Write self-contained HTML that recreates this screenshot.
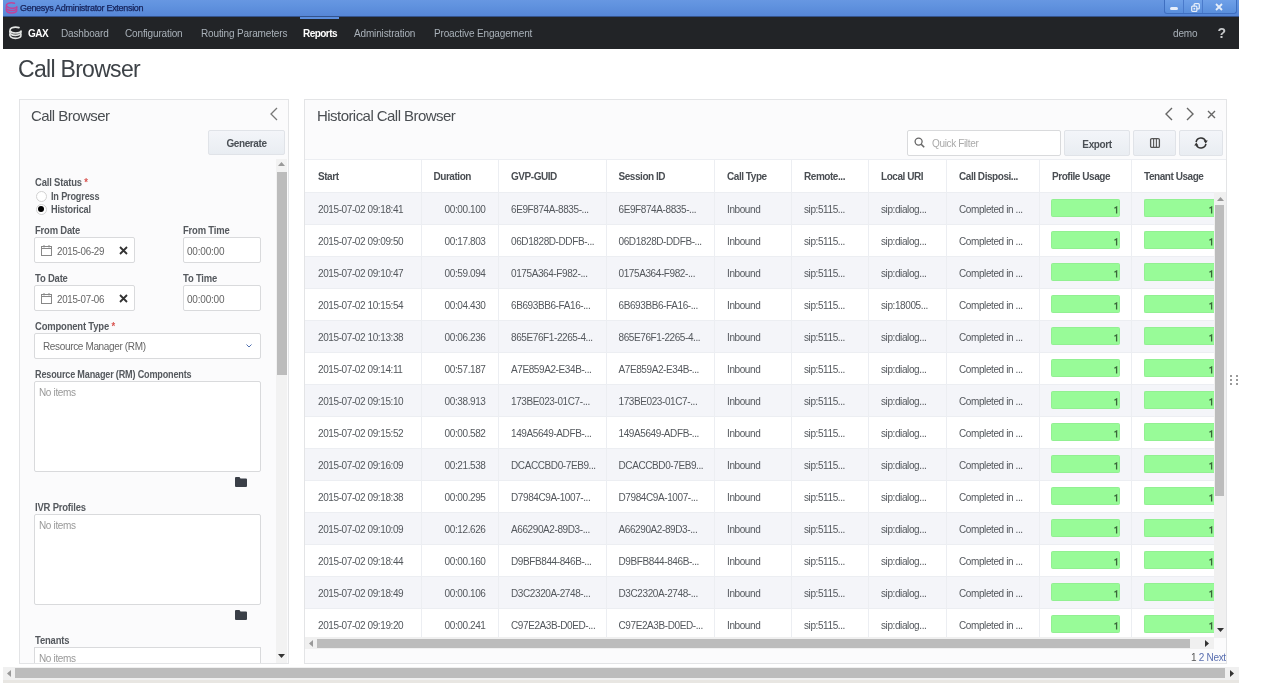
<!DOCTYPE html>
<html><head><meta charset="utf-8">
<style>
*{box-sizing:border-box;margin:0;padding:0}
html,body{width:1282px;height:683px;overflow:hidden;background:#fff;-webkit-font-smoothing:antialiased;font-family:"Liberation Sans",sans-serif;color:#444}
.abs{position:absolute}
#titlebar{position:absolute;left:3px;top:0;width:1236px;height:17px;background:linear-gradient(#6797e2,#6193df 30%,#5585d6);}
#titlebar .t{position:absolute;left:17px;top:3px;font-size:9px;color:#15225a;letter-spacing:-0.3px;-webkit-text-stroke:0.25px #15225a}
#nav{position:absolute;left:3px;top:17px;width:1236px;height:32px;background:#222427}
#nav .i{position:absolute;top:11px;font-size:10px;color:#a9b1b9;white-space:nowrap;letter-spacing:-0.15px}
#nav .act{color:#fff;font-weight:bold;letter-spacing:-0.55px}
#win{position:absolute;left:3px;top:49px;width:1236px;height:634px;background:#fff}
h1{position:absolute;left:18px;top:56px;font-size:23px;letter-spacing:-0.7px;font-weight:normal;color:#3d4247;white-space:nowrap}
.panel{position:absolute;background:#fbfbfc;border:1px solid #e3e4e6}
.ptitle{position:absolute;font-size:15px;letter-spacing:-0.55px;color:#4a4e52;white-space:nowrap}
.lbl{position:absolute;font-size:10.5px;letter-spacing:-0.2px;transform:scaleX(0.9);transform-origin:0 0;font-weight:bold;color:#55595e;white-space:nowrap}
.req{color:#d9534f}
.box{position:absolute;background:#fff;border:1px solid #d9dadc;border-radius:2px}
.btn{position:absolute;letter-spacing:-0.4px;padding-top:1px;background:linear-gradient(#f3f5f9,#e9edf2);border:1px solid #e0e3e8;border-radius:2px;font-size:10px;font-weight:bold;color:#4a4f55;text-align:center}
.txt{position:absolute;font-size:10px;color:#666;white-space:nowrap;letter-spacing:-0.35px}
.th{position:absolute;top:160px;height:32px;line-height:34px;padding-left:13px;font-size:10px;letter-spacing:-0.45px;font-weight:bold;color:#4a4e53;background:#fff;white-space:nowrap}
.tr{position:absolute;left:305px;width:909px;height:32px;background:#fff;border-top:1px solid #eceef2}
.tr.odd{background:#f4f5f9}
.td{position:absolute;height:32px;line-height:35px;padding-left:13px;font-size:10px;letter-spacing:-0.4px;color:#54585d;white-space:nowrap;overflow:hidden}
.td.num{text-align:right;padding-left:0;padding-right:12.5px}
.vsep{position:absolute;top:160px;width:1px;height:478px;background:#eceef2}
.bar{position:absolute;height:18px;background:#98fb98;border:1px solid #92f092;border-radius:1.5px;font-size:11px;color:#2a4a2a;text-align:right;padding-right:1px;line-height:18px;}
.one{position:absolute;right:1px;top:6px}
.bar.clip{border-right:none;border-radius:2px 0 0 2px}
</style></head><body><div id="root" style="position:absolute;left:0;top:0;width:1282px;height:683px;will-change:transform">
<div id="titlebar">
  <svg class="abs" style="left:2px;top:2px" width="13" height="12" viewBox="0 0 13 12"><g stroke="#c0449a" stroke-width="1.5" fill="none" stroke-linecap="round"><path d="M9.5 1.2 Q6 0.4 3.2 1.4 Q0.8 2.5 1.6 4.2 Q3 6.3 6.5 6.3 Q11 6.2 11.8 4.8"/><path d="M1.2 5 Q1 8.5 6.5 8.6 Q12 8.5 11.8 5.5"/><path d="M1.2 7.5 Q1 10.8 6.5 10.9 Q12 10.8 11.8 7.8"/></g></svg>
  <div class="t">Genesys Administrator Extension</div>
  <div class="abs" style="left:1161px;top:0;width:73px;height:14px;border:1px solid #3f6fc0;border-top:none;border-radius:0 0 3px 3px;background:linear-gradient(#6fa0e8,#5a8fdc)"></div>
  <div class="abs" style="left:1180px;top:0;width:1px;height:13px;background:#4a7acb"></div>
  <div class="abs" style="left:1199px;top:0;width:1px;height:13px;background:#4a7acb"></div>
  <div class="abs" style="left:1167px;top:7px;width:8px;height:3px;background:#e6eefa;border-radius:1.5px"></div>
  <svg class="abs" style="left:1188px;top:2.5px" width="9" height="9" viewBox="0 0 10 10"><rect x="3.5" y="0.8" width="5.7" height="5.7" rx="1" fill="none" stroke="#e6eefa" stroke-width="1.4"/><rect x="0.8" y="3.5" width="5.7" height="5.7" rx="1" fill="#5a8fdc" stroke="#e6eefa" stroke-width="1.4"/><rect x="2.7" y="5.3" width="2" height="2" fill="#e6eefa"/></svg>
  <svg class="abs" style="left:1212px;top:3px" width="8" height="8" viewBox="0 0 8 8"><path d="M1 1 L7 7 M7 1 L1 7" stroke="#e6eefa" stroke-width="1.8"/></svg>
  <div class="abs" style="left:0;top:16px;width:1236px;height:1px;background:#34538c"></div>
</div>
<div id="nav">
  <svg class="abs" style="left:5px;top:9px" width="15" height="14" viewBox="0 0 15 14"><g stroke="#e4e6e4" stroke-width="1.6" fill="none" stroke-linecap="round"><path d="M11 1.6 Q7 0.6 4 1.8 Q1.5 3 2.2 4.8 Q3.5 7 7.5 7 Q12.5 6.9 13 5"/><path d="M1.8 5.2 Q1.4 9.2 7.5 9.4 Q13.4 9.2 13 5.8"/><path d="M1.8 8 Q1.4 12.2 7.5 12.4 Q13.4 12.2 13 8.6"/></g></svg>
  <div class="i act" style="left:25px">GAX</div>
  <div class="i" style="left:58px">Dashboard</div>
  <div class="i" style="left:122px">Configuration</div>
  <div class="i" style="left:198px">Routing Parameters</div>
  <div class="i act" style="left:300px">Reports</div>
  <div class="abs" style="left:297px;top:0;width:39px;height:2px;background:#5b8ede"></div>
  <div class="i" style="left:351px">Administration</div>
  <div class="i" style="left:431px">Proactive Engagement</div>
  <div class="i" style="left:1170px">demo</div>
  <div class="i" style="left:1214.5px;top:8px;font-size:14px;color:#c8cacc;font-weight:bold">?</div>
</div>
<h1>Call Browser</h1>

<!-- left panel -->
<div class="panel" style="left:19px;top:99px;width:270px;height:565px"></div>
<div class="ptitle" style="left:31px;top:107px">Call Browser</div>
<svg class="abs" style="left:269px;top:107px" width="10" height="14" viewBox="0 0 10 14"><path d="M8 1 L2 7 L8 13" stroke="#777" stroke-width="1.3" fill="none"/></svg>
<div class="btn" style="left:208px;top:130px;width:77px;height:25px;line-height:24px">Generate</div>
<!-- left scrollbar -->
<div class="abs" style="left:276px;top:159px;width:11px;height:504px;background:#f2f2f2"></div>
<div class="abs" style="left:277px;top:172px;width:10px;height:203px;background:#bcbcbc"></div>
<svg class="abs" style="left:278px;top:162px" width="7" height="5"><path d="M0 4 L3.5 0 L7 4Z" fill="#999"/></svg>
<svg class="abs" style="left:278px;top:654px" width="7" height="5"><path d="M0 0 L3.5 4 L7 0Z" fill="#333"/></svg>

<div class="lbl" style="left:35px;top:176px">Call Status <span class="req">*</span></div>
<div class="abs" style="left:35.5px;top:190.5px;width:11px;height:11px;border:1.3px solid #d2d2d2;border-radius:50%;background:#fff"></div>
<div class="lbl" style="left:51px;top:190px;transform:scaleX(0.87)">In Progress</div>
<div class="abs" style="left:35.5px;top:203.5px;width:11px;height:11px;border:1.3px solid #d2d2d2;border-radius:50%;background:#fff"></div>
<div class="abs" style="left:38px;top:206px;width:6px;height:6px;border-radius:50%;background:#000"></div>
<div class="lbl" style="left:51px;top:203px;transform:scaleX(0.87)">Historical</div>

<div class="lbl" style="left:35px;top:224px">From Date</div>
<div class="lbl" style="left:183px;top:224px">From Time</div>
<div class="box" style="left:34px;top:237px;width:101px;height:26px"></div>
<svg class="abs" style="left:41px;top:245px" width="11" height="11" viewBox="0 0 11 11"><rect x="0.5" y="1.5" width="10" height="9" fill="none" stroke="#888" stroke-width="1"/><path d="M0.5 3.5 H10.5 M3 0 V2.5 M8 0 V2.5" stroke="#888" stroke-width="1"/></svg>
<div class="txt" style="left:57px;top:245px;font-size:10.5px;letter-spacing:-0.3px;transform:scaleX(0.93);transform-origin:0 0">2015-06-29</div>
<svg class="abs" style="left:119px;top:246px" width="9" height="9" viewBox="0 0 9 9"><path d="M1 1 L8 8 M8 1 L1 8" stroke="#333" stroke-width="1.8"/></svg>
<div class="box" style="left:183px;top:237px;width:78px;height:26px"></div>
<div class="txt" style="left:187px;top:246px;letter-spacing:-0.2px">00:00:00</div>

<div class="lbl" style="left:35px;top:272px">To Date</div>
<div class="lbl" style="left:183px;top:272px">To Time</div>
<div class="box" style="left:34px;top:285px;width:101px;height:26px"></div>
<svg class="abs" style="left:41px;top:293px" width="11" height="11" viewBox="0 0 11 11"><rect x="0.5" y="1.5" width="10" height="9" fill="none" stroke="#888" stroke-width="1"/><path d="M0.5 3.5 H10.5 M3 0 V2.5 M8 0 V2.5" stroke="#888" stroke-width="1"/></svg>
<div class="txt" style="left:57px;top:293px;font-size:10.5px;letter-spacing:-0.3px;transform:scaleX(0.93);transform-origin:0 0">2015-07-06</div>
<svg class="abs" style="left:119px;top:294px" width="9" height="9" viewBox="0 0 9 9"><path d="M1 1 L8 8 M8 1 L1 8" stroke="#333" stroke-width="1.8"/></svg>
<div class="box" style="left:183px;top:285px;width:78px;height:26px"></div>
<div class="txt" style="left:187px;top:294px;letter-spacing:-0.2px">00:00:00</div>

<div class="lbl" style="left:35px;top:320px">Component Type <span class="req">*</span></div>
<div class="box" style="left:34px;top:333px;width:227px;height:26px"></div>
<div class="txt" style="left:43px;top:341px">Resource Manager (RM)</div>
<svg class="abs" style="left:246px;top:344px" width="6" height="4"><path d="M0.5 0.5 L3 3 L5.5 0.5" stroke="#5070b0" stroke-width="1" fill="none"/></svg>

<div class="lbl" style="left:35px;top:368px;transform:scaleX(0.865)">Resource Manager (RM) Components</div>
<div class="box" style="left:34px;top:381px;width:227px;height:91px"></div>
<div class="txt" style="left:39px;top:387px;color:#999">No items</div>
<svg class="abs" style="left:235px;top:477px" width="12" height="10" viewBox="0 0 12 10"><path d="M0 1 Q0 0 1 0 H4.5 L5.5 1.5 H11 Q12 1.5 12 2.5 V9 Q12 10 11 10 H1 Q0 10 0 9Z" fill="#3a3f47"/></svg>

<div class="lbl" style="left:35px;top:501px">IVR Profiles</div>
<div class="box" style="left:34px;top:514px;width:227px;height:91px"></div>
<div class="txt" style="left:39px;top:520px;color:#999">No items</div>
<svg class="abs" style="left:235px;top:610px" width="12" height="10" viewBox="0 0 12 10"><path d="M0 1 Q0 0 1 0 H4.5 L5.5 1.5 H11 Q12 1.5 12 2.5 V9 Q12 10 11 10 H1 Q0 10 0 9Z" fill="#3a3f47"/></svg>

<div class="lbl" style="left:35px;top:634px">Tenants</div>
<div class="abs" style="left:34px;top:647px;width:227px;height:16px;background:#fff;border:1px solid #d9dadc;border-bottom:none;overflow:hidden"><div class="txt" style="left:4px;top:5px;color:#999">No items</div></div>

<!-- right panel -->
<div class="panel" style="left:304px;top:99px;width:923px;height:565px"></div>
<div class="ptitle" style="left:317px;top:107px">Historical Call Browser</div>
<svg class="abs" style="left:1164px;top:107px" width="10" height="14" viewBox="0 0 10 14"><path d="M8 1 L2 7 L8 13" stroke="#666" stroke-width="1.4" fill="none"/></svg>
<svg class="abs" style="left:1185px;top:107px" width="10" height="14" viewBox="0 0 10 14"><path d="M2 1 L8 7 L2 13" stroke="#666" stroke-width="1.4" fill="none"/></svg>
<svg class="abs" style="left:1207px;top:110px" width="9" height="9" viewBox="0 0 9 9"><path d="M1 1 L8 8 M8 1 L1 8" stroke="#666" stroke-width="1.4"/></svg>
<div class="box" style="left:907px;top:130px;width:154px;height:26px"></div>
<svg class="abs" style="left:914px;top:137px" width="11" height="11" viewBox="0 0 11 11"><circle cx="4.6" cy="4.6" r="3.5" stroke="#666" stroke-width="1.3" fill="none"/><path d="M7.2 7.2 L10.2 10.2" stroke="#666" stroke-width="1.6"/></svg>
<div class="txt" style="left:932px;top:138px;color:#aaa">Quick Filter</div>
<div class="btn" style="left:1064px;top:130px;width:66px;height:26px;line-height:25px">Export</div>
<div class="btn" style="left:1133px;top:130px;width:43px;height:26px"></div>
<svg class="abs" style="left:1149px;top:137px" width="12" height="12" viewBox="0 0 12 12"><rect x="1.6" y="1.6" width="8.8" height="8.8" rx="1.2" fill="none" stroke="#555" stroke-width="1.3"/><path d="M4.6 1.6 V10.4 M7.4 1.6 V10.4" stroke="#555" stroke-width="1.1"/></svg>
<div class="btn" style="left:1179px;top:130px;width:44px;height:26px"></div>
<svg class="abs" style="left:1194px;top:135.5px" width="14" height="14" viewBox="0 0 14 14"><g fill="none" stroke="#333" stroke-width="1.6"><path d="M2.1 6.1 A5 5 0 0 1 11.7 5.3"/><path d="M11.9 7.9 A5 5 0 0 1 2.3 8.7"/></g><path d="M9.6 4.6 L13.8 4.6 L11.7 7.6Z" fill="#333"/><path d="M0.2 9.4 L4.4 9.4 L2.3 6.4Z" fill="#333"/></svg>

<!-- table -->
<div class="abs" style="left:305px;top:159px;width:921px;height:1px;background:#eceef2"></div>
<div class="abs" style="left:305px;top:160px;width:921px;height:32px;background:#fff"></div>
<div class="th" style="left:305px;width:115.5px">Start</div>
<div class="th" style="left:420.5px;width:77.5px">Duration</div>
<div class="th" style="left:498px;width:107.5px">GVP-GUID</div>
<div class="th" style="left:605.5px;width:108.5px">Session ID</div>
<div class="th" style="left:714px;width:77px">Call Type</div>
<div class="th" style="left:791px;width:77px">Remote...</div>
<div class="th" style="left:868px;width:78px">Local URI</div>
<div class="th" style="left:946px;width:93px">Call Disposi...</div>
<div class="th" style="left:1039px;width:92px">Profile Usage</div>
<div class="th" style="left:1131px;width:83px">Tenant Usage</div>
<div class="tr odd" style="top:192px"></div>
<div class="td" style="left:305px;width:115.5px;top:192px">2015-07-02 09:18:41</div>
<div class="td num" style="left:420.5px;width:77.5px;top:192px">00:00.100</div>
<div class="td" style="left:498px;width:107.5px;top:192px">6E9F874A-8835-...</div>
<div class="td" style="left:605.5px;width:108.5px;top:192px">6E9F874A-8835-...</div>
<div class="td" style="left:714px;width:77px;top:192px">Inbound</div>
<div class="td" style="left:791px;width:77px;top:192px">sip:5115...</div>
<div class="td" style="left:868px;width:78px;top:192px">sip:dialog...</div>
<div class="td" style="left:946px;width:93px;top:192px">Completed in ...</div>
<div class="bar" style="left:1051px;top:199px;width:69px"><svg class="one" width="4" height="8" viewBox="0 0 4 8"><path d="M0.4 2.3 L2.6 1 V7.6" stroke="#3a663a" stroke-width="1.3" fill="none"/></svg></div>
<div class="bar clip" style="left:1144px;top:199px;width:69.5px"><svg class="one" style="right:1px" width="4" height="8" viewBox="0 0 4 8"><path d="M0.4 2.3 L2.6 1 V7.6" stroke="#3a663a" stroke-width="1.3" fill="none"/></svg></div>
<div class="tr" style="top:224px"></div>
<div class="td" style="left:305px;width:115.5px;top:224px">2015-07-02 09:09:50</div>
<div class="td num" style="left:420.5px;width:77.5px;top:224px">00:17.803</div>
<div class="td" style="left:498px;width:107.5px;top:224px">06D1828D-DDFB-...</div>
<div class="td" style="left:605.5px;width:108.5px;top:224px">06D1828D-DDFB-...</div>
<div class="td" style="left:714px;width:77px;top:224px">Inbound</div>
<div class="td" style="left:791px;width:77px;top:224px">sip:5115...</div>
<div class="td" style="left:868px;width:78px;top:224px">sip:dialog...</div>
<div class="td" style="left:946px;width:93px;top:224px">Completed in ...</div>
<div class="bar" style="left:1051px;top:231px;width:69px"><svg class="one" width="4" height="8" viewBox="0 0 4 8"><path d="M0.4 2.3 L2.6 1 V7.6" stroke="#3a663a" stroke-width="1.3" fill="none"/></svg></div>
<div class="bar clip" style="left:1144px;top:231px;width:69.5px"><svg class="one" style="right:1px" width="4" height="8" viewBox="0 0 4 8"><path d="M0.4 2.3 L2.6 1 V7.6" stroke="#3a663a" stroke-width="1.3" fill="none"/></svg></div>
<div class="tr odd" style="top:256px"></div>
<div class="td" style="left:305px;width:115.5px;top:256px">2015-07-02 09:10:47</div>
<div class="td num" style="left:420.5px;width:77.5px;top:256px">00:59.094</div>
<div class="td" style="left:498px;width:107.5px;top:256px">0175A364-F982-...</div>
<div class="td" style="left:605.5px;width:108.5px;top:256px">0175A364-F982-...</div>
<div class="td" style="left:714px;width:77px;top:256px">Inbound</div>
<div class="td" style="left:791px;width:77px;top:256px">sip:5115...</div>
<div class="td" style="left:868px;width:78px;top:256px">sip:dialog...</div>
<div class="td" style="left:946px;width:93px;top:256px">Completed in ...</div>
<div class="bar" style="left:1051px;top:263px;width:69px"><svg class="one" width="4" height="8" viewBox="0 0 4 8"><path d="M0.4 2.3 L2.6 1 V7.6" stroke="#3a663a" stroke-width="1.3" fill="none"/></svg></div>
<div class="bar clip" style="left:1144px;top:263px;width:69.5px"><svg class="one" style="right:1px" width="4" height="8" viewBox="0 0 4 8"><path d="M0.4 2.3 L2.6 1 V7.6" stroke="#3a663a" stroke-width="1.3" fill="none"/></svg></div>
<div class="tr" style="top:288px"></div>
<div class="td" style="left:305px;width:115.5px;top:288px">2015-07-02 10:15:54</div>
<div class="td num" style="left:420.5px;width:77.5px;top:288px">00:04.430</div>
<div class="td" style="left:498px;width:107.5px;top:288px">6B693BB6-FA16-...</div>
<div class="td" style="left:605.5px;width:108.5px;top:288px">6B693BB6-FA16-...</div>
<div class="td" style="left:714px;width:77px;top:288px">Inbound</div>
<div class="td" style="left:791px;width:77px;top:288px">sip:5115...</div>
<div class="td" style="left:868px;width:78px;top:288px">sip:18005...</div>
<div class="td" style="left:946px;width:93px;top:288px">Completed in ...</div>
<div class="bar" style="left:1051px;top:295px;width:69px"><svg class="one" width="4" height="8" viewBox="0 0 4 8"><path d="M0.4 2.3 L2.6 1 V7.6" stroke="#3a663a" stroke-width="1.3" fill="none"/></svg></div>
<div class="bar clip" style="left:1144px;top:295px;width:69.5px"><svg class="one" style="right:1px" width="4" height="8" viewBox="0 0 4 8"><path d="M0.4 2.3 L2.6 1 V7.6" stroke="#3a663a" stroke-width="1.3" fill="none"/></svg></div>
<div class="tr odd" style="top:320px"></div>
<div class="td" style="left:305px;width:115.5px;top:320px">2015-07-02 10:13:38</div>
<div class="td num" style="left:420.5px;width:77.5px;top:320px">00:06.236</div>
<div class="td" style="left:498px;width:107.5px;top:320px">865E76F1-2265-4...</div>
<div class="td" style="left:605.5px;width:108.5px;top:320px">865E76F1-2265-4...</div>
<div class="td" style="left:714px;width:77px;top:320px">Inbound</div>
<div class="td" style="left:791px;width:77px;top:320px">sip:5115...</div>
<div class="td" style="left:868px;width:78px;top:320px">sip:dialog...</div>
<div class="td" style="left:946px;width:93px;top:320px">Completed in ...</div>
<div class="bar" style="left:1051px;top:327px;width:69px"><svg class="one" width="4" height="8" viewBox="0 0 4 8"><path d="M0.4 2.3 L2.6 1 V7.6" stroke="#3a663a" stroke-width="1.3" fill="none"/></svg></div>
<div class="bar clip" style="left:1144px;top:327px;width:69.5px"><svg class="one" style="right:1px" width="4" height="8" viewBox="0 0 4 8"><path d="M0.4 2.3 L2.6 1 V7.6" stroke="#3a663a" stroke-width="1.3" fill="none"/></svg></div>
<div class="tr" style="top:352px"></div>
<div class="td" style="left:305px;width:115.5px;top:352px">2015-07-02 09:14:11</div>
<div class="td num" style="left:420.5px;width:77.5px;top:352px">00:57.187</div>
<div class="td" style="left:498px;width:107.5px;top:352px">A7E859A2-E34B-...</div>
<div class="td" style="left:605.5px;width:108.5px;top:352px">A7E859A2-E34B-...</div>
<div class="td" style="left:714px;width:77px;top:352px">Inbound</div>
<div class="td" style="left:791px;width:77px;top:352px">sip:5115...</div>
<div class="td" style="left:868px;width:78px;top:352px">sip:dialog...</div>
<div class="td" style="left:946px;width:93px;top:352px">Completed in ...</div>
<div class="bar" style="left:1051px;top:359px;width:69px"><svg class="one" width="4" height="8" viewBox="0 0 4 8"><path d="M0.4 2.3 L2.6 1 V7.6" stroke="#3a663a" stroke-width="1.3" fill="none"/></svg></div>
<div class="bar clip" style="left:1144px;top:359px;width:69.5px"><svg class="one" style="right:1px" width="4" height="8" viewBox="0 0 4 8"><path d="M0.4 2.3 L2.6 1 V7.6" stroke="#3a663a" stroke-width="1.3" fill="none"/></svg></div>
<div class="tr odd" style="top:384px"></div>
<div class="td" style="left:305px;width:115.5px;top:384px">2015-07-02 09:15:10</div>
<div class="td num" style="left:420.5px;width:77.5px;top:384px">00:38.913</div>
<div class="td" style="left:498px;width:107.5px;top:384px">173BE023-01C7-...</div>
<div class="td" style="left:605.5px;width:108.5px;top:384px">173BE023-01C7-...</div>
<div class="td" style="left:714px;width:77px;top:384px">Inbound</div>
<div class="td" style="left:791px;width:77px;top:384px">sip:5115...</div>
<div class="td" style="left:868px;width:78px;top:384px">sip:dialog...</div>
<div class="td" style="left:946px;width:93px;top:384px">Completed in ...</div>
<div class="bar" style="left:1051px;top:391px;width:69px"><svg class="one" width="4" height="8" viewBox="0 0 4 8"><path d="M0.4 2.3 L2.6 1 V7.6" stroke="#3a663a" stroke-width="1.3" fill="none"/></svg></div>
<div class="bar clip" style="left:1144px;top:391px;width:69.5px"><svg class="one" style="right:1px" width="4" height="8" viewBox="0 0 4 8"><path d="M0.4 2.3 L2.6 1 V7.6" stroke="#3a663a" stroke-width="1.3" fill="none"/></svg></div>
<div class="tr" style="top:416px"></div>
<div class="td" style="left:305px;width:115.5px;top:416px">2015-07-02 09:15:52</div>
<div class="td num" style="left:420.5px;width:77.5px;top:416px">00:00.582</div>
<div class="td" style="left:498px;width:107.5px;top:416px">149A5649-ADFB-...</div>
<div class="td" style="left:605.5px;width:108.5px;top:416px">149A5649-ADFB-...</div>
<div class="td" style="left:714px;width:77px;top:416px">Inbound</div>
<div class="td" style="left:791px;width:77px;top:416px">sip:5115...</div>
<div class="td" style="left:868px;width:78px;top:416px">sip:dialog...</div>
<div class="td" style="left:946px;width:93px;top:416px">Completed in ...</div>
<div class="bar" style="left:1051px;top:423px;width:69px"><svg class="one" width="4" height="8" viewBox="0 0 4 8"><path d="M0.4 2.3 L2.6 1 V7.6" stroke="#3a663a" stroke-width="1.3" fill="none"/></svg></div>
<div class="bar clip" style="left:1144px;top:423px;width:69.5px"><svg class="one" style="right:1px" width="4" height="8" viewBox="0 0 4 8"><path d="M0.4 2.3 L2.6 1 V7.6" stroke="#3a663a" stroke-width="1.3" fill="none"/></svg></div>
<div class="tr odd" style="top:448px"></div>
<div class="td" style="left:305px;width:115.5px;top:448px">2015-07-02 09:16:09</div>
<div class="td num" style="left:420.5px;width:77.5px;top:448px">00:21.538</div>
<div class="td" style="left:498px;width:107.5px;top:448px">DCACCBD0-7EB9...</div>
<div class="td" style="left:605.5px;width:108.5px;top:448px">DCACCBD0-7EB9...</div>
<div class="td" style="left:714px;width:77px;top:448px">Inbound</div>
<div class="td" style="left:791px;width:77px;top:448px">sip:5115...</div>
<div class="td" style="left:868px;width:78px;top:448px">sip:dialog...</div>
<div class="td" style="left:946px;width:93px;top:448px">Completed in ...</div>
<div class="bar" style="left:1051px;top:455px;width:69px"><svg class="one" width="4" height="8" viewBox="0 0 4 8"><path d="M0.4 2.3 L2.6 1 V7.6" stroke="#3a663a" stroke-width="1.3" fill="none"/></svg></div>
<div class="bar clip" style="left:1144px;top:455px;width:69.5px"><svg class="one" style="right:1px" width="4" height="8" viewBox="0 0 4 8"><path d="M0.4 2.3 L2.6 1 V7.6" stroke="#3a663a" stroke-width="1.3" fill="none"/></svg></div>
<div class="tr" style="top:480px"></div>
<div class="td" style="left:305px;width:115.5px;top:480px">2015-07-02 09:18:38</div>
<div class="td num" style="left:420.5px;width:77.5px;top:480px">00:00.295</div>
<div class="td" style="left:498px;width:107.5px;top:480px">D7984C9A-1007-...</div>
<div class="td" style="left:605.5px;width:108.5px;top:480px">D7984C9A-1007-...</div>
<div class="td" style="left:714px;width:77px;top:480px">Inbound</div>
<div class="td" style="left:791px;width:77px;top:480px">sip:5115...</div>
<div class="td" style="left:868px;width:78px;top:480px">sip:dialog...</div>
<div class="td" style="left:946px;width:93px;top:480px">Completed in ...</div>
<div class="bar" style="left:1051px;top:487px;width:69px"><svg class="one" width="4" height="8" viewBox="0 0 4 8"><path d="M0.4 2.3 L2.6 1 V7.6" stroke="#3a663a" stroke-width="1.3" fill="none"/></svg></div>
<div class="bar clip" style="left:1144px;top:487px;width:69.5px"><svg class="one" style="right:1px" width="4" height="8" viewBox="0 0 4 8"><path d="M0.4 2.3 L2.6 1 V7.6" stroke="#3a663a" stroke-width="1.3" fill="none"/></svg></div>
<div class="tr odd" style="top:512px"></div>
<div class="td" style="left:305px;width:115.5px;top:512px">2015-07-02 09:10:09</div>
<div class="td num" style="left:420.5px;width:77.5px;top:512px">00:12.626</div>
<div class="td" style="left:498px;width:107.5px;top:512px">A66290A2-89D3-...</div>
<div class="td" style="left:605.5px;width:108.5px;top:512px">A66290A2-89D3-...</div>
<div class="td" style="left:714px;width:77px;top:512px">Inbound</div>
<div class="td" style="left:791px;width:77px;top:512px">sip:5115...</div>
<div class="td" style="left:868px;width:78px;top:512px">sip:dialog...</div>
<div class="td" style="left:946px;width:93px;top:512px">Completed in ...</div>
<div class="bar" style="left:1051px;top:519px;width:69px"><svg class="one" width="4" height="8" viewBox="0 0 4 8"><path d="M0.4 2.3 L2.6 1 V7.6" stroke="#3a663a" stroke-width="1.3" fill="none"/></svg></div>
<div class="bar clip" style="left:1144px;top:519px;width:69.5px"><svg class="one" style="right:1px" width="4" height="8" viewBox="0 0 4 8"><path d="M0.4 2.3 L2.6 1 V7.6" stroke="#3a663a" stroke-width="1.3" fill="none"/></svg></div>
<div class="tr" style="top:544px"></div>
<div class="td" style="left:305px;width:115.5px;top:544px">2015-07-02 09:18:44</div>
<div class="td num" style="left:420.5px;width:77.5px;top:544px">00:00.160</div>
<div class="td" style="left:498px;width:107.5px;top:544px">D9BFB844-846B-...</div>
<div class="td" style="left:605.5px;width:108.5px;top:544px">D9BFB844-846B-...</div>
<div class="td" style="left:714px;width:77px;top:544px">Inbound</div>
<div class="td" style="left:791px;width:77px;top:544px">sip:5115...</div>
<div class="td" style="left:868px;width:78px;top:544px">sip:dialog...</div>
<div class="td" style="left:946px;width:93px;top:544px">Completed in ...</div>
<div class="bar" style="left:1051px;top:551px;width:69px"><svg class="one" width="4" height="8" viewBox="0 0 4 8"><path d="M0.4 2.3 L2.6 1 V7.6" stroke="#3a663a" stroke-width="1.3" fill="none"/></svg></div>
<div class="bar clip" style="left:1144px;top:551px;width:69.5px"><svg class="one" style="right:1px" width="4" height="8" viewBox="0 0 4 8"><path d="M0.4 2.3 L2.6 1 V7.6" stroke="#3a663a" stroke-width="1.3" fill="none"/></svg></div>
<div class="tr odd" style="top:576px"></div>
<div class="td" style="left:305px;width:115.5px;top:576px">2015-07-02 09:18:49</div>
<div class="td num" style="left:420.5px;width:77.5px;top:576px">00:00.106</div>
<div class="td" style="left:498px;width:107.5px;top:576px">D3C2320A-2748-...</div>
<div class="td" style="left:605.5px;width:108.5px;top:576px">D3C2320A-2748-...</div>
<div class="td" style="left:714px;width:77px;top:576px">Inbound</div>
<div class="td" style="left:791px;width:77px;top:576px">sip:5115...</div>
<div class="td" style="left:868px;width:78px;top:576px">sip:dialog...</div>
<div class="td" style="left:946px;width:93px;top:576px">Completed in ...</div>
<div class="bar" style="left:1051px;top:583px;width:69px"><svg class="one" width="4" height="8" viewBox="0 0 4 8"><path d="M0.4 2.3 L2.6 1 V7.6" stroke="#3a663a" stroke-width="1.3" fill="none"/></svg></div>
<div class="bar clip" style="left:1144px;top:583px;width:69.5px"><svg class="one" style="right:1px" width="4" height="8" viewBox="0 0 4 8"><path d="M0.4 2.3 L2.6 1 V7.6" stroke="#3a663a" stroke-width="1.3" fill="none"/></svg></div>
<div class="tr" style="top:608px"></div>
<div class="td" style="left:305px;width:115.5px;top:608px">2015-07-02 09:19:20</div>
<div class="td num" style="left:420.5px;width:77.5px;top:608px">00:00.241</div>
<div class="td" style="left:498px;width:107.5px;top:608px">C97E2A3B-D0ED-...</div>
<div class="td" style="left:605.5px;width:108.5px;top:608px">C97E2A3B-D0ED-...</div>
<div class="td" style="left:714px;width:77px;top:608px">Inbound</div>
<div class="td" style="left:791px;width:77px;top:608px">sip:5115...</div>
<div class="td" style="left:868px;width:78px;top:608px">sip:dialog...</div>
<div class="td" style="left:946px;width:93px;top:608px">Completed in ...</div>
<div class="bar" style="left:1051px;top:615px;width:69px"><svg class="one" width="4" height="8" viewBox="0 0 4 8"><path d="M0.4 2.3 L2.6 1 V7.6" stroke="#3a663a" stroke-width="1.3" fill="none"/></svg></div>
<div class="bar clip" style="left:1144px;top:615px;width:69.5px"><svg class="one" style="right:1px" width="4" height="8" viewBox="0 0 4 8"><path d="M0.4 2.3 L2.6 1 V7.6" stroke="#3a663a" stroke-width="1.3" fill="none"/></svg></div>
<div class="vsep" style="left:420.5px"></div>
<div class="vsep" style="left:498px"></div>
<div class="vsep" style="left:605.5px"></div>
<div class="vsep" style="left:714px"></div>
<div class="vsep" style="left:791px"></div>
<div class="vsep" style="left:868px"></div>
<div class="vsep" style="left:946px"></div>
<div class="vsep" style="left:1039px"></div>
<div class="vsep" style="left:1131px"></div>
<!-- vertical table scrollbar -->
<div class="abs" style="left:1214px;top:192px;width:12px;height:446px;background:#f0f0f0"></div>
<div class="abs" style="left:1215px;top:205px;width:9px;height:291px;background:#bcbcbc"></div>
<svg class="abs" style="left:1217px;top:197px" width="7" height="5"><path d="M0 4 L3.5 0 L7 4Z" fill="#999"/></svg>
<svg class="abs" style="left:1217px;top:628px" width="7" height="5"><path d="M0 0 L3.5 4 L7 0Z" fill="#333"/></svg>
<!-- horizontal table scrollbar -->
<div class="abs" style="left:305px;top:637px;width:909px;height:12px;background:#f0f0f0"></div>
<div class="abs" style="left:317px;top:639px;width:873px;height:9px;background:#bcbcbc"></div>
<svg class="abs" style="left:309px;top:640px" width="4" height="7"><path d="M4 0 L0 3.5 L4 7Z" fill="#999"/></svg>
<svg class="abs" style="left:1205px;top:640px" width="4" height="7"><path d="M0 0 L4 3.5 L0 7Z" fill="#333"/></svg>
<div class="abs" style="left:1191px;top:652px;font-size:10px;color:#555;white-space:nowrap;letter-spacing:-0.3px">1 <span style="color:#5a6fb0">2 Next</span></div>

<!-- drag handle -->
<svg class="abs" style="left:1230px;top:375px" width="10" height="12"><g fill="#9a9a9a"><rect x="0" y="0" width="2" height="2"/><rect x="0" y="4" width="2" height="2"/><rect x="0" y="8" width="2" height="2"/><rect x="6" y="0" width="2" height="2"/><rect x="6" y="4" width="2" height="2"/><rect x="6" y="8" width="2" height="2"/></g></svg>

<!-- bottom window scrollbar -->
<div class="abs" style="left:3px;top:667px;width:1236px;height:16px;background:#f0f0f0"></div>
<div class="abs" style="left:15px;top:668px;width:1210px;height:10px;background:#bcbcbc"></div>
<svg class="abs" style="left:7px;top:670px" width="4" height="7"><path d="M4 0 L0 3.5 L4 7Z" fill="#999"/></svg>
<svg class="abs" style="left:1230px;top:670px" width="4" height="7"><path d="M0 0 L4 3.5 L0 7Z" fill="#333"/></svg>
<div class="abs" style="left:3px;top:680px;width:1236px;height:3px;background:#e8e6e2"></div>
</div></body></html>
